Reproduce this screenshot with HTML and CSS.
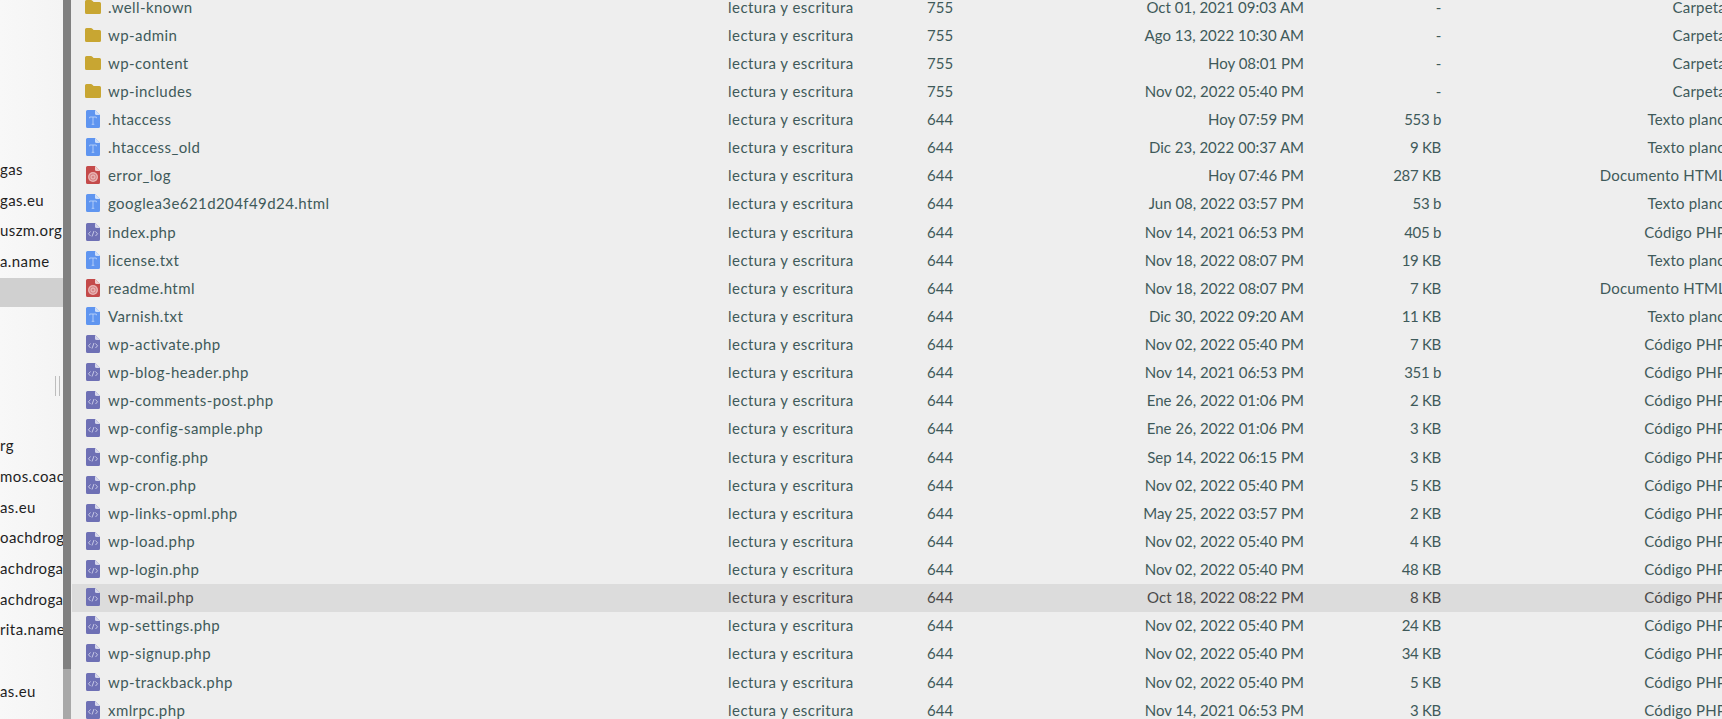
FILE: index.html
```html
<!DOCTYPE html>
<html lang="es">
<head>
<meta charset="utf-8">
<title>Archivos</title>
<link rel="stylesheet" href="styles.css">
</head>
<body>
<svg class="defs" width="0" height="0" aria-hidden="true">
  <symbol id="i-folder" viewBox="0 0 16 14">
    <path d="M1.500 0H6c.5 0 .8.2 1.100.5L8.600 2H14.500A1.500 1.500 0 0 1 16 3.500V12.500A1.500 1.500 0 0 1 14.500 14H1.500A1.500 1.500 0 0 1 0 12.500V1.500A1.500 1.500 0 0 1 1.500 0Z" fill="#c8a632"/>
  </symbol>
  <symbol id="i-text" viewBox="0 0 14 18">
    <path d="M1.500 0H9L14 5V16.500A1.500 1.500 0 0 1 12.500 18H1.500A1.500 1.500 0 0 1 0 16.500V1.500A1.500 1.500 0 0 1 1.500 0Z" fill="#5f95f0"/>
    <path d="M9 0L14 5H10.500A1.500 1.500 0 0 1 9 3.500Z" fill="#cfe0fb"/>
    <path d="M3.700 8.300V7H10.300V8.300M7 7V14.300M5.700 14.300H8.300" fill="none" stroke="#c3d8fa" stroke-width="0.800"/>
  </symbol>
  <symbol id="i-html" viewBox="0 0 14 18">
    <path d="M1.500 0H9L14 5V16.500A1.500 1.500 0 0 1 12.500 18H1.500A1.500 1.500 0 0 1 0 16.500V1.500A1.500 1.500 0 0 1 1.500 0Z" fill="#c44a4a"/>
    <path d="M9 0L14 5H10.500A1.500 1.500 0 0 1 9 3.500Z" fill="#f0cfcf"/>
    <circle cx="7" cy="11" r="5" fill="#e8b4b4"/>
    <circle cx="7" cy="11" r="3.200" fill="none" stroke="#cf7070" stroke-width="0.800"/>
    <circle cx="7" cy="11" r="1.300" fill="#d78787"/>
  </symbol>
  <symbol id="i-php" viewBox="0 0 14 18">
    <path d="M1.500 0H9L14 5V16.500A1.500 1.500 0 0 1 12.500 18H1.500A1.500 1.500 0 0 1 0 16.500V1.500A1.500 1.500 0 0 1 1.500 0Z" fill="#6e70b5"/>
    <path d="M9 0L14 5H10.500A1.500 1.500 0 0 1 9 3.500Z" fill="#d5d6ec"/>
    <path d="M4.500 8.500L2.500 10.800L4.500 13M9.500 8.500L11.500 10.800L9.500 13M8 8L6 13.500" fill="none" stroke="#cfd0ea" stroke-width="0.900"/>
  </symbol>
</svg>

<div class="app">
  <aside class="tree">
    <div class="tree-list">
      <div class="tree-row">gas</div>
      <div class="tree-row">gas.eu</div>
      <div class="tree-row">uszm.org</div>
      <div class="tree-row">a.name</div>
      <div class="tree-row selected"></div>
      <div class="tree-row"></div>
      <div class="tree-row"></div>
      <div class="tree-row"></div>
      <div class="tree-row"></div>
      <div class="tree-row">rg</div>
      <div class="tree-row">mos.coac</div>
      <div class="tree-row">as.eu</div>
      <div class="tree-row">oachdrog</div>
      <div class="tree-row">achdroga</div>
      <div class="tree-row">achdrogas</div>
      <div class="tree-row">rita.name</div>
      <div class="tree-row"></div>
      <div class="tree-row">as.eu</div>
    </div>
    <div class="grip"></div>
  </aside>
  <div class="scrollbar"><div class="thumb"></div></div>
  <main class="files">
    <div class="file-row"><svg class="icon folder"><use href="#i-folder"/></svg><span class="name">.well-known</span><span class="perm">lectura y escritura</span><span>755</span><span class="r">Oct 01, 2021 09:03 AM</span><span class="r size">-</span><span class="r type">Carpeta</span></div>
    <div class="file-row"><svg class="icon folder"><use href="#i-folder"/></svg><span class="name">wp-admin</span><span class="perm">lectura y escritura</span><span>755</span><span class="r">Ago 13, 2022 10:30 AM</span><span class="r size">-</span><span class="r type">Carpeta</span></div>
    <div class="file-row"><svg class="icon folder"><use href="#i-folder"/></svg><span class="name">wp-content</span><span class="perm">lectura y escritura</span><span>755</span><span class="r">Hoy 08:01 PM</span><span class="r size">-</span><span class="r type">Carpeta</span></div>
    <div class="file-row"><svg class="icon folder"><use href="#i-folder"/></svg><span class="name">wp-includes</span><span class="perm">lectura y escritura</span><span>755</span><span class="r">Nov 02, 2022 05:40 PM</span><span class="r size">-</span><span class="r type">Carpeta</span></div>
    <div class="file-row"><svg class="icon file"><use href="#i-text"/></svg><span class="name">.htaccess</span><span class="perm">lectura y escritura</span><span>644</span><span class="r">Hoy 07:59 PM</span><span class="r size">553 b</span><span class="r type">Texto plano</span></div>
    <div class="file-row"><svg class="icon file"><use href="#i-text"/></svg><span class="name">.htaccess_old</span><span class="perm">lectura y escritura</span><span>644</span><span class="r">Dic 23, 2022 00:37 AM</span><span class="r size">9 KB</span><span class="r type">Texto plano</span></div>
    <div class="file-row"><svg class="icon file"><use href="#i-html"/></svg><span class="name">error_log</span><span class="perm">lectura y escritura</span><span>644</span><span class="r">Hoy 07:46 PM</span><span class="r size">287 KB</span><span class="r type">Documento HTML</span></div>
    <div class="file-row"><svg class="icon file"><use href="#i-text"/></svg><span class="name">googlea3e621d204f49d24.html</span><span class="perm">lectura y escritura</span><span>644</span><span class="r">Jun 08, 2022 03:57 PM</span><span class="r size">53 b</span><span class="r type">Texto plano</span></div>
    <div class="file-row"><svg class="icon file"><use href="#i-php"/></svg><span class="name">index.php</span><span class="perm">lectura y escritura</span><span>644</span><span class="r">Nov 14, 2021 06:53 PM</span><span class="r size">405 b</span><span class="r type">Código PHP</span></div>
    <div class="file-row"><svg class="icon file"><use href="#i-text"/></svg><span class="name">license.txt</span><span class="perm">lectura y escritura</span><span>644</span><span class="r">Nov 18, 2022 08:07 PM</span><span class="r size">19 KB</span><span class="r type">Texto plano</span></div>
    <div class="file-row"><svg class="icon file"><use href="#i-html"/></svg><span class="name">readme.html</span><span class="perm">lectura y escritura</span><span>644</span><span class="r">Nov 18, 2022 08:07 PM</span><span class="r size">7 KB</span><span class="r type">Documento HTML</span></div>
    <div class="file-row"><svg class="icon file"><use href="#i-text"/></svg><span class="name">Varnish.txt</span><span class="perm">lectura y escritura</span><span>644</span><span class="r">Dic 30, 2022 09:20 AM</span><span class="r size">11 KB</span><span class="r type">Texto plano</span></div>
    <div class="file-row"><svg class="icon file"><use href="#i-php"/></svg><span class="name">wp-activate.php</span><span class="perm">lectura y escritura</span><span>644</span><span class="r">Nov 02, 2022 05:40 PM</span><span class="r size">7 KB</span><span class="r type">Código PHP</span></div>
    <div class="file-row"><svg class="icon file"><use href="#i-php"/></svg><span class="name">wp-blog-header.php</span><span class="perm">lectura y escritura</span><span>644</span><span class="r">Nov 14, 2021 06:53 PM</span><span class="r size">351 b</span><span class="r type">Código PHP</span></div>
    <div class="file-row"><svg class="icon file"><use href="#i-php"/></svg><span class="name">wp-comments-post.php</span><span class="perm">lectura y escritura</span><span>644</span><span class="r">Ene 26, 2022 01:06 PM</span><span class="r size">2 KB</span><span class="r type">Código PHP</span></div>
    <div class="file-row"><svg class="icon file"><use href="#i-php"/></svg><span class="name">wp-config-sample.php</span><span class="perm">lectura y escritura</span><span>644</span><span class="r">Ene 26, 2022 01:06 PM</span><span class="r size">3 KB</span><span class="r type">Código PHP</span></div>
    <div class="file-row"><svg class="icon file"><use href="#i-php"/></svg><span class="name">wp-config.php</span><span class="perm">lectura y escritura</span><span>644</span><span class="r">Sep 14, 2022 06:15 PM</span><span class="r size">3 KB</span><span class="r type">Código PHP</span></div>
    <div class="file-row"><svg class="icon file"><use href="#i-php"/></svg><span class="name">wp-cron.php</span><span class="perm">lectura y escritura</span><span>644</span><span class="r">Nov 02, 2022 05:40 PM</span><span class="r size">5 KB</span><span class="r type">Código PHP</span></div>
    <div class="file-row"><svg class="icon file"><use href="#i-php"/></svg><span class="name">wp-links-opml.php</span><span class="perm">lectura y escritura</span><span>644</span><span class="r">May 25, 2022 03:57 PM</span><span class="r size">2 KB</span><span class="r type">Código PHP</span></div>
    <div class="file-row"><svg class="icon file"><use href="#i-php"/></svg><span class="name">wp-load.php</span><span class="perm">lectura y escritura</span><span>644</span><span class="r">Nov 02, 2022 05:40 PM</span><span class="r size">4 KB</span><span class="r type">Código PHP</span></div>
    <div class="file-row"><svg class="icon file"><use href="#i-php"/></svg><span class="name">wp-login.php</span><span class="perm">lectura y escritura</span><span>644</span><span class="r">Nov 02, 2022 05:40 PM</span><span class="r size">48 KB</span><span class="r type">Código PHP</span></div>
    <div class="file-row hover"><svg class="icon file"><use href="#i-php"/></svg><span class="name">wp-mail.php</span><span class="perm">lectura y escritura</span><span>644</span><span class="r">Oct 18, 2022 08:22 PM</span><span class="r size">8 KB</span><span class="r type">Código PHP</span></div>
    <div class="file-row"><svg class="icon file"><use href="#i-php"/></svg><span class="name">wp-settings.php</span><span class="perm">lectura y escritura</span><span>644</span><span class="r">Nov 02, 2022 05:40 PM</span><span class="r size">24 KB</span><span class="r type">Código PHP</span></div>
    <div class="file-row"><svg class="icon file"><use href="#i-php"/></svg><span class="name">wp-signup.php</span><span class="perm">lectura y escritura</span><span>644</span><span class="r">Nov 02, 2022 05:40 PM</span><span class="r size">34 KB</span><span class="r type">Código PHP</span></div>
    <div class="file-row"><svg class="icon file"><use href="#i-php"/></svg><span class="name">wp-trackback.php</span><span class="perm">lectura y escritura</span><span>644</span><span class="r">Nov 02, 2022 05:40 PM</span><span class="r size">5 KB</span><span class="r type">Código PHP</span></div>
    <div class="file-row"><svg class="icon file"><use href="#i-php"/></svg><span class="name">xmlrpc.php</span><span class="perm">lectura y escritura</span><span>644</span><span class="r">Nov 14, 2021 06:53 PM</span><span class="r size">3 KB</span><span class="r type">Código PHP</span></div>
  </main>
</div>
</body>
</html>
```

FILE: styles.css
```css
html, body {
  margin: 0;
  height: 100%;
  overflow: hidden;
}

body {
  font-family: "Lato", "Open Sans", sans-serif;
  font-size: 15px;
  color: #3f5a5a;
  background: #eeeeee;
}

.defs {
  position: absolute;
}

.app {
  display: flex;
  height: 719px;
  overflow: hidden;
}

.tree {
  position: relative;
  flex: 0 0 63px;
  width: 63px;
  overflow: hidden;
  background: linear-gradient(to right, #f8f8f8, #f4f4f4);
  color: #1f1f1f;
}

.tree-list {
  display: flex;
  flex-direction: column;
  gap: 1.7px;
  padding-top: 155px;
}

.tree-row {
  flex: 0 0 29px;
  height: 29px;
  line-height: 29px;
  letter-spacing: 0.4px;
  white-space: nowrap;
  overflow: hidden;
}

.tree-row.selected {
  background: #d0d0d0;
}

.grip {
  position: absolute;
  left: 55px;
  top: 376px;
  width: 3px;
  height: 20px;
  border-left: 1px solid #bdbdbd;
  border-right: 1px solid #bdbdbd;
}

.scrollbar {
  flex: 0 0 8px;
  width: 8px;
  background: #a8a8a8;
}

.thumb {
  height: 669px;
  background: #808080;
}

.files {
  flex: 1 1 0;
  min-width: 0;
  margin-left: 1px;
  margin-top: -7px;
}

.file-row {
  display: grid;
  box-sizing: border-box;
  grid-template-columns: 23px 620px 199px 100px 277px 137px 285px;
  align-items: center;
  width: 1654px;
  height: 28.14px;
  padding-left: 13px;
  padding-bottom: 1px;
  white-space: nowrap;
}

.file-row.hover {
  background: #dcdcdc;
  color: #4a4a4a;
}

.name {
  letter-spacing: 0.42px;
}

.perm {
  letter-spacing: 0.46px;
}

.size {
  letter-spacing: -0.3px;
}

.type {
  letter-spacing: 0.2px;
}

.r {
  text-align: right;
}

.icon {
  display: block;
}

.icon.folder {
  width: 16px;
  height: 14px;
}

.icon.file {
  width: 14px;
  height: 18px;
  margin-left: 1px;
}
```
